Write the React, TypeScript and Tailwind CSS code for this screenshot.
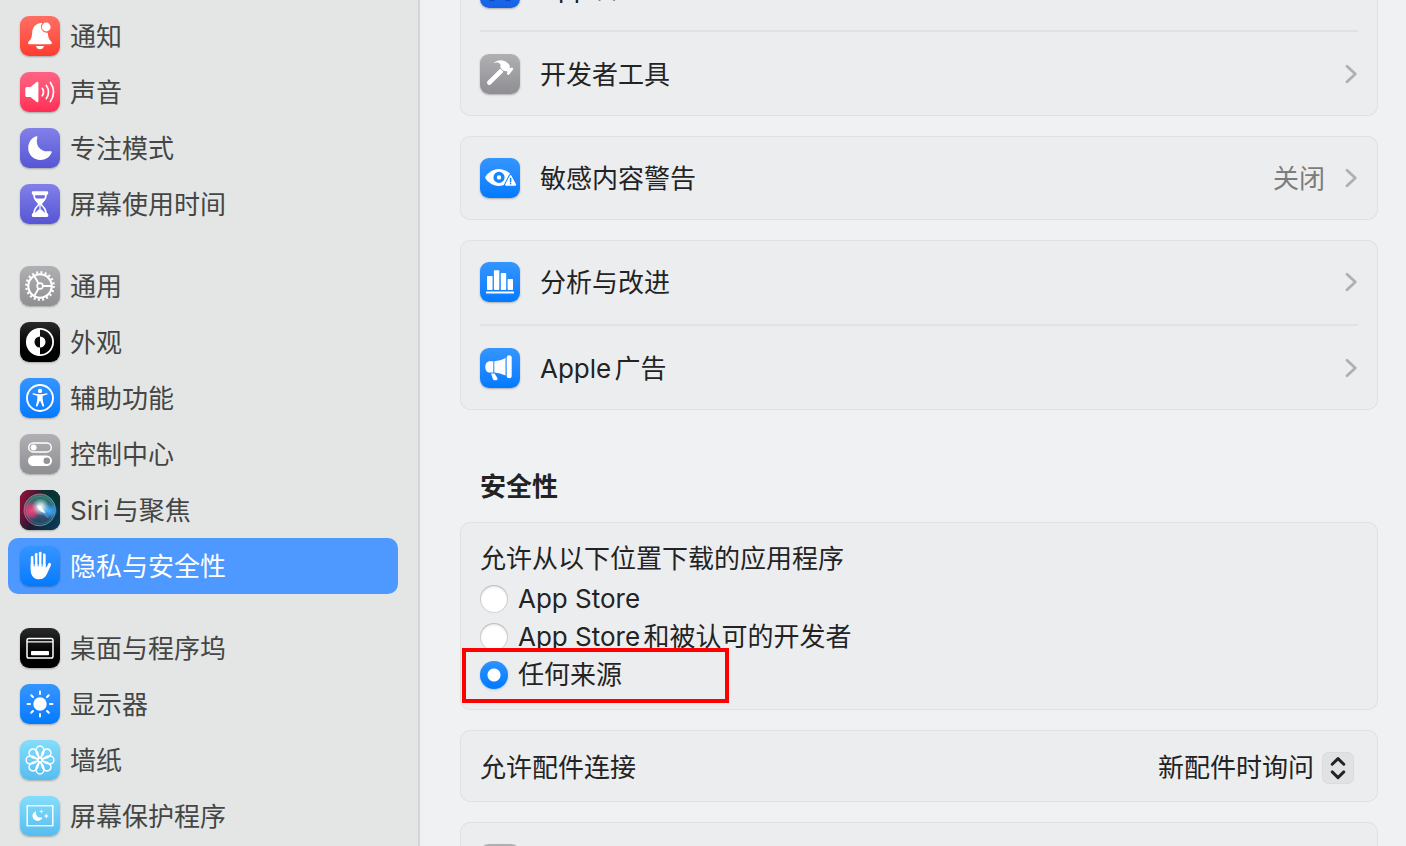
import type { ReactNode } from "react";

const TONES = {
  red: "bg-linear-to-b from-[#ff6e63] to-[#ff3a2f]",
  pink: "bg-linear-to-b from-[#ff6384] to-[#ff2d55]",
  indigo: "bg-linear-to-b from-[#8280e8] to-[#5755d4]",
  gray: "bg-linear-to-b from-[#b0b0b4] to-[#8f8e93]",
  black: "bg-linear-to-b from-[#2a2a2a] to-[#000000]",
  blue: "bg-linear-to-b from-[#3395ff] to-[#007aff]",
  sky: "bg-linear-to-b from-[#84ddfa] to-[#56bdf0]",
  deep: "bg-linear-to-b from-[#1c8cf8] to-[#1a5fe6]",
  siri: "bg-[#1b1a2c]",
};

type Tone = keyof typeof TONES;

function Tile({ tone, children }: { tone: Tone; children?: ReactNode }) {
  return (
    <span
      className={`block size-10 shrink-0 overflow-hidden rounded-[9px] shadow-[0_1px_2px_rgba(0,0,0,0.28)] ${TONES[tone]}`}
    >
      <svg viewBox="0 0 40 40" className="block size-10" fill="none" aria-hidden="true">
        {children}
      </svg>
    </span>
  );
}

const bell = (
  <Tile tone="red">
    <path
      fill="#fff"
      d="M18.6 7.6C20 6.6 21.3 6.8 22.2 7.3a5.9 5.9 0 0 0 5.6 9.4c.3 4.6 1.2 6.6 3.2 8.6 1.300 1.300 1.200 2.900-.4 2.900H9.300c-1.600 0-1.700-1.600-.4-2.900 2.200-2.200 3-4.400 3.300-9.100.2-4.200 2.600-7.200 6.400-8.600zM16 30h8c-.5 2-2 3.300-4 3.300S16.500 32 16 30z"
    />
    <circle cx="26.200" cy="11" r="4.400" fill="#fff" />
  </Tile>
);

const speaker = (
  <Tile tone="pink">
    <path
      fill="#fff"
      d="M6.800 14.900h3.700l5.900-4.700c1-.8 2-.4 2 .8v18c0 1.200-1 1.600-2 .8l-5.900-4.800H6.800c-.9 0-1.500-.6-1.500-1.500v-7.100c0-.9.6-1.500 1.500-1.500z"
    />
    <g stroke="#fff" strokeWidth="1.700" strokeLinecap="round">
      <path d="M22.300 16.300c1.500 2.300 1.500 5.100 0 7.400" />
      <path d="M26.300 13.400c2.700 4.100 2.700 9.100 0 13.200" />
      <path d="M30.400 10.500c4 6 4 13 0 19" />
    </g>
  </Tile>
);

const moon = (
  <Tile tone="indigo">
    <path
      fill="#fff"
      d="M16.200 8.300c.9-.3 1.400.3 1.100 1.100-2.200 7.400 2.400 15.100 13.300 13.800.9-.1 1.400.5 1 1.300C29.600 29.200 25.600 32 20.400 32 13.600 32 8.200 26.800 8.200 20c0-5.300 3.100-9.900 8-11.700z"
    />
  </Tile>
);

const hourglass = (
  <Tile tone="indigo">
    <path
      fill="#fff"
      d="M13 7.300h14a1.200 1.200 0 0 1 1.200 1.300l-.1 1c-.1.900-.7 1.300-1.300 1.400-.1 4-2.300 6.300-4.100 8-.7.700-.7 1.500 0 2.200 1.800 1.700 4 4 4.200 7.800.6.200 1.200.6 1.300 1.400l.1 1.200c.1.800-.5 1.400-1.300 1.400H13c-.8 0-1.300-.6-1.200-1.400l.1-1.200c.1-.8.700-1.200 1.300-1.400.1-3.800 2.300-6.100 4.100-7.800.7-.7.700-1.500 0-2.200-1.800-1.700-4-4-4.100-8-.6-.1-1.200-.5-1.300-1.400l-.1-1A1.200 1.200 0 0 1 13 7.300z"
    />
    <path
      fill="#6c6adf"
      d="M15 11.200h10c0 1.300-.3 2.500-.9 3.400h-8.200a7 7 0 0 1-.9-3.400zM19.400 21c.4-.4.800-.4 1.200 0v4.200c1.600.9 3.300 2.200 4.400 3.900l-.1-1.200c-.4-2.700-2-4.400-3.700-6.100-.3-.3-.5-.6-.6-.9h-1.200c-.1.300-.3.600-.6.900-1.700 1.700-3.300 3.400-3.700 6.100l-.1 1.200c1.100-1.700 2.800-3 4.400-3.900z"
    />
  </Tile>
);

const gear = (
  <Tile tone="gray">
    <g stroke="#fff">
      <circle cx="20" cy="20" r="11.700" strokeWidth="2.100" />
      <circle cx="20" cy="20" r="13.700" strokeWidth="2.300" strokeDasharray="2 2.304" />
      <circle cx="20" cy="20" r="2.900" strokeWidth="1.600" />
      <path strokeWidth="1.900" d="M22.900 20h8.300M18.550 17.500 14.400 10.300M18.550 22.500 14.400 29.700" />
    </g>
  </Tile>
);

const appearance = (
  <Tile tone="black">
    <circle cx="20" cy="20" r="13.100" stroke="#fff" strokeWidth="1.800" />
    <path fill="#fff" d="M20 6.500a13.500 13.500 0 0 0 0 27v-8a5.500 5.500 0 0 1 0-11zM20 14.500a5.500 5.500 0 0 1 0 11z" />
  </Tile>
);

const accessibility = (
  <Tile tone="blue">
    <circle cx="20" cy="20" r="13" stroke="#fff" strokeWidth="1.900" />
    <circle cx="20" cy="12.900" r="2.200" fill="#fff" />
    <path
      fill="#fff"
      d="M13.300 15.300c2.300.5 4.500.9 6.700.9s4.400-.4 6.700-.9c1-.2 1.300 1 .3 1.300-1.600.5-3 .8-4.300 1.100-.4 2.900.4 6.300 1.400 9.800.3 1.200-1.200 1.700-1.700.6L20.300 23h-.6l-2.100 5.100c-.5 1.100-2 .6-1.700-.6 1-3.500 1.800-6.900 1.400-9.800-1.300-.3-2.700-.6-4.300-1.100-1-.3-.7-1.500.3-1.300z"
    />
  </Tile>
);

const toggles = (
  <Tile tone="gray">
    <rect x="8.700" y="8.900" width="22.600" height="9" rx="4.500" stroke="#fff" strokeWidth="1.500" />
    <circle cx="13.600" cy="13.400" r="3" fill="#fff" />
    <rect x="8" y="21.500" width="24" height="10.600" rx="5.300" fill="#fff" />
    <circle cx="26.800" cy="26.800" r="3.300" fill="#949398" />
  </Tile>
);

const siri = (
  <Tile tone="siri">
    <defs>
      <linearGradient id="siri-base" x1="0" y1="0.300" x2="1" y2="0.700">
        <stop offset="0" stopColor="#8a1238" />
        <stop offset="0.450" stopColor="#1c1c33" />
        <stop offset="1" stopColor="#0a3a58" />
      </linearGradient>
      <linearGradient id="siri-top" x1="0" y1="0" x2="0" y2="1">
        <stop offset="0" stopColor="#2a8f6e" />
        <stop offset="0.550" stopColor="#4a6590" />
        <stop offset="1" stopColor="#1f4660" />
      </linearGradient>
      <radialGradient id="siri-pink">
        <stop offset="0" stopColor="#f5467a" />
        <stop offset="0.600" stopColor="#e03a70" stopOpacity="0.700" />
        <stop offset="1" stopColor="#d8265c" stopOpacity="0" />
      </radialGradient>
      <radialGradient id="siri-blue">
        <stop offset="0" stopColor="#45b4ff" />
        <stop offset="0.600" stopColor="#2f97ee" stopOpacity="0.700" />
        <stop offset="1" stopColor="#1b7fe0" stopOpacity="0" />
      </radialGradient>
      <radialGradient id="siri-glow">
        <stop offset="0" stopColor="#fff" />
        <stop offset="0.350" stopColor="#e9fbff" stopOpacity="0.750" />
        <stop offset="1" stopColor="#a8f0e8" stopOpacity="0" />
      </radialGradient>
    </defs>
    <rect width="40" height="40" fill="url(#siri-base)" />
    <path d="M20 0h20v18z" fill="#06392f" opacity="0.700" />
    <circle cx="20" cy="20" r="16" fill="url(#siri-top)" opacity="0.800" />
    <ellipse cx="11.500" cy="20.500" rx="9" ry="9.500" fill="url(#siri-pink)" />
    <ellipse cx="29" cy="21" rx="9" ry="7.500" fill="url(#siri-blue)" />
    <circle cx="20.500" cy="17" r="9" fill="url(#siri-glow)" />
    <path d="M17 15.500c3 .3 5.500 2.200 8.500 7.500-4.500-.4-7.500-3-8.500-7.500z" fill="#fff" opacity="0.900" />
    <path d="m23 22 5.500 6" stroke="#e7a3b5" strokeWidth="0.800" opacity="0.700" />
    <path d="M4.500 16a16 16 0 0 0 10 19" stroke="#e0527e" strokeWidth="0.900" />
    <path d="M4.500 16A16 16 0 0 1 26 5.200" stroke="#a5808f" strokeWidth="0.900" />
    <path d="M26 5.200A16 16 0 0 1 14.500 35" stroke="#48a9b0" strokeWidth="0.900" />
    <circle cx="20" cy="20" r="13.700" stroke="#7fb0b0" strokeWidth="0.500" opacity="0.600" />
  </Tile>
);

const hand = (
  <Tile tone="blue">
    <g stroke="#fff" strokeWidth="2.900" strokeLinecap="round">
      <path d="M12.200 11.500V23M16.200 8.500V22M20.200 7.200V22M24.200 9V22" />
      <path d="M29.600 18.300 26.500 25" />
    </g>
    <path
      fill="#fff"
      d="M10.750 18h14.900v4.200l3.300-3.900 1.800.8-3.600 8.400c-1.500 3.700-4.100 5.800-8 5.800-5 0-8.400-3.500-8.400-8.800z"
    />
    <path d="M14.200 11v9M18.200 9v11M22.200 9v11" stroke="#1c88ff" strokeWidth="0.900" strokeLinecap="round" />
  </Tile>
);

const desktop = (
  <Tile tone="black">
    <rect x="7" y="10.500" width="26" height="19.600" rx="1.800" stroke="#fff" strokeWidth="1.500" />
    <path d="M7 13.800h26" stroke="#fff" strokeWidth="1.300" />
    <rect x="11" y="23" width="18" height="4.200" rx="0.800" fill="#fff" />
  </Tile>
);

const sun = (
  <Tile tone="blue">
    <circle cx="20" cy="20" r="6.700" fill="#fff" />
    <g stroke="#fff" strokeWidth="2" strokeLinecap="round">
      <path d="M20 7.600v2.400M20 30v2.400M7.600 20H10M30 20h2.400M11.230 11.230l1.700 1.700M27.070 27.070l1.700 1.700M11.230 28.770l1.700-1.700M27.070 12.930l1.700-1.700" />
    </g>
  </Tile>
);

const PETALS = [0, 45, 90, 135, 180, 225, 270, 315];

const flower = (
  <Tile tone="sky">
    <g stroke="#fff" strokeWidth="1.500" strokeLinejoin="round">
      {PETALS.map((angle) => (
        <path
          key={angle}
          transform={`rotate(${angle} 20 20)`}
          d="M20 17.900c-1.700-.9-4-4.200-4-7.300a4 4.500 0 0 1 8 0c0 3.100-2.300 6.400-4 7.300z"
        />
      ))}
      <circle cx="20" cy="20" r="2" />
    </g>
  </Tile>
);

const screensaver = (
  <Tile tone="sky">
    <rect x="7.200" y="9.700" width="25.600" height="20" stroke="#fff" strokeWidth="1.400" />
    <path fill="#fff" d="M16.200 15.200c-1 4 1.700 7.200 6.300 6.200-.9 2.100-2.700 3.400-4.900 3.400-2.900 0-5.100-2.200-5.100-5 0-2.100 1.400-3.900 3.700-4.600z" />
    <path
      fill="#fff"
      d="m21.300 13.200.6 1.700 1.700.6-1.700.6-.6 1.700-.6-1.700-1.700-.6 1.700-.6zM26.300 17.300l.7 2 2 .7-2 .7-.7 2-.7-2-2-.7 2-.7z"
    />
  </Tile>
);

const appManage = (
  <Tile tone="deep">
    <path
      d="M12 26.500 20 12l8 14.500M9 23h22M10 32.500h4M26 32.500h4"
      stroke="#0f48c4"
      strokeWidth="1.400"
      strokeLinecap="round"
    />
  </Tile>
);

const hammer = (
  <Tile tone="gray">
    <path d="M9.300 28.700 21.200 16.900" stroke="#fff" strokeWidth="4.600" strokeLinecap="round" />
    <path
      fill="#fff"
      d="M14.500 8.300C18.500 5.300 24.500 5.600 27.900 9.300l1.300 1.500c.7.900.6 1.900.5 2.900l.8.500 1-.6c.4-.2.700-.1 1 .2l.6.700c.3.400.3.700 0 1l-4.100 5.200c-.3.300-.7.400-1 .1l-.9-.9c-.3-.3-.3-.6-.1-.9l.5-1-1-.9c-1.200.3-2.200 0-3.100-.8l-3.200-3c.8-1.900.3-3.500-1.200-4.400-1.300-.4-2.700-.4-4.100 0-.6.100-.9-.3-.4-.6z"
    />
    <path d="m19.600 13.700 5.100 5" stroke="#a09fa4" strokeWidth="0.800" />
  </Tile>
);

const eyeWarning = (
  <Tile tone="blue">
    <path
      fill="#fff"
      d="M19 10.900c7.300 0 13.700 6.200 13.700 8.600S26.300 28 19 28 5.300 21.800 5.300 19.500 11.700 10.900 19 10.900z"
    />
    <circle cx="19" cy="19.400" r="3.900" stroke="#1585ff" strokeWidth="3.400" />
    <path
      d="M29.800 17.600c.4-.7 1.200-.7 1.600 0l4.600 8.700c.4.700 0 1.400-.8 1.400H26c-.8 0-1.200-.7-.8-1.400z"
      fill="#fff"
      stroke="#1585ff"
      strokeWidth="2"
      paintOrder="stroke"
    />
    <path d="M30.600 20.500v3.200M30.600 25.600v.1" stroke="#1585ff" strokeWidth="1.500" strokeLinecap="round" />
  </Tile>
);

const chart = (
  <Tile tone="blue">
    <g fill="#fff">
      <rect x="7" y="14" width="5.600" height="14" rx="0.800" />
      <rect x="13.900" y="8.300" width="5.400" height="19.700" rx="0.800" />
      <rect x="20.800" y="11" width="5.400" height="17" rx="0.800" />
      <rect x="27.600" y="17" width="5.400" height="11" rx="0.800" />
      <rect x="6" y="29.600" width="28" height="2" rx="0.600" />
    </g>
  </Tile>
);

const megaphone = (
  <Tile tone="blue">
    <g fill="#fff">
      <path d="M10 13.300h3.300v11.200H10c-3 0-4.700-2.300-4.700-5.600s1.700-5.600 4.700-5.600z" />
      <path d="M14.300 13.200c4-.5 7.800-1.400 11.200-3.300v17.700c-3.400-1.900-7.200-2.800-11.200-3.200z" />
      <rect x="26.700" y="7.300" width="5" height="23" rx="2.500" />
      <path d="M11 25.600h3.600l2.600 4.100c.8 1.300.1 2.600-1.300 2.600h-1.200c-.9 0-1.500-.5-1.800-1.300z" />
    </g>
  </Tile>
);

type NavEntry = { label: string; icon: ReactNode; active?: boolean };

const NAV: NavEntry[][] = [
  [
    { label: "通知", icon: bell },
    { label: "声音", icon: speaker },
    { label: "专注模式", icon: moon },
    { label: "屏幕使用时间", icon: hourglass },
  ],
  [
    { label: "通用", icon: gear },
    { label: "外观", icon: appearance },
    { label: "辅助功能", icon: accessibility },
    { label: "控制中心", icon: toggles },
    { label: "Siri与聚焦", icon: siri },
    { label: "隐私与安全性", icon: hand, active: true },
  ],
  [
    { label: "桌面与程序坞", icon: desktop },
    { label: "显示器", icon: sun },
    { label: "墙纸", icon: flower },
    { label: "屏幕保护程序", icon: screensaver },
  ],
];

function Card({ children }: { children: ReactNode }) {
  return (
    <section className="rounded-[10px] bg-[#ecedef] px-5 shadow-[inset_0_0_0_1px_#e0e1e3]">{children}</section>
  );
}

function Row({ icon, label, value }: { icon: ReactNode; label: string; value?: string }) {
  return (
    <button type="button" className="flex h-[84px] w-full items-center gap-5 text-left">
      {icon}
      <span className="flex-1 pt-0.5">{label}</span>
      {value && <span className="pt-0.5 text-[#7b7c7d]">{value}</span>}
      <svg viewBox="0 0 13 20" className="h-5 w-[13px]" fill="none" aria-hidden="true">
        <path d="M2 2.300 10.300 10 2 17.700" stroke="#afb0b1" strokeWidth="2.800" strokeLinecap="round" strokeLinejoin="round" />
      </svg>
    </button>
  );
}

function Divider() {
  return <div className="h-0.5 bg-[#e1e2e4]" />;
}

function Choice({ label, checked }: { label: string; checked?: boolean }) {
  return (
    <label className="flex h-[38px] items-center gap-2.5">
      <input
        type="radio"
        name="download-source"
        defaultChecked={checked}
        className="size-7 shrink-0 appearance-none rounded-full bg-white shadow-[inset_0_0_0_1px_rgba(0,0,0,0.16),inset_0_2px_3px_rgba(0,0,0,0.12)] checked:bg-[radial-gradient(circle,#fff_6px,transparent_7px),linear-gradient(#2e93ff,#007aff)] checked:shadow-[0_1px_2px_rgba(0,80,200,0.25)]"
      />
      {label}
    </label>
  );
}

export default function App() {
  return (
    <div className="flex h-screen overflow-hidden bg-[#f0f1f3] font-['Inter','Noto_Sans_CJK_SC',sans-serif] text-[26px] leading-[38px] text-[#232324] [text-autospace:normal]">
      <nav className="flex w-[420px] shrink-0 flex-col gap-[26px] border-r-2 border-[#d3d4d4] bg-[#e4e6e5] py-2 pr-5 pl-2 text-[#444645]">
        {NAV.map((group) => (
          <ul key={group[0].label}>
            {group.map((item) => (
              <li key={item.label}>
                <a
                  href="#"
                  aria-current={item.active ? "page" : undefined}
                  className={`flex h-14 items-center gap-2.5 rounded-[10px] px-3 ${item.active ? "bg-[#4d99ff] text-white" : ""}`}
                >
                  {item.icon}
                  <span className="pt-0.5">{item.label}</span>
                </a>
              </li>
            ))}
          </ul>
        ))}
      </nav>

      <main className="-mt-[54px] flex min-w-0 flex-1 flex-col gap-5 pr-7 pl-10">
        <Card>
          <Row icon={appManage} label="App管理" />
          <Divider />
          <Row icon={hammer} label="开发者工具" />
        </Card>

        <Card>
          <Row icon={eyeWarning} label="敏感内容警告" value="关闭" />
        </Card>

        <Card>
          <Row icon={chart} label="分析与改进" />
          <Divider />
          <Row icon={megaphone} label="Apple广告" />
        </Card>

        <h2 className="mt-[38px] -mb-[4px] px-5 font-bold">安全性</h2>

        <Card>
          <fieldset className="pt-[18px] pb-4">
            <legend className="float-left mb-0.5 w-full">允许从以下位置下载的应用程序</legend>
            <div className="clear-both">
              <Choice label="App Store" />
              <Choice label="App Store和被认可的开发者" />
              <div className="relative">
                <Choice label="任何来源" checked />
                <div className="pointer-events-none absolute -top-2 -left-[18px] h-[55px] w-[267px] border-4 border-[#ff0000]" />
              </div>
            </div>
          </fieldset>
        </Card>

        <Card>
          <div className="flex h-[72px] items-center justify-between pt-1 pr-1">
            <label htmlFor="accessory">允许配件连接</label>
            <div className="relative flex items-center">
              <select
                id="accessory"
                className="appearance-none bg-transparent pr-10 text-right outline-none"
                defaultValue="ask"
              >
                <option value="ask">新配件时询问</option>
              </select>
              <span className="pointer-events-none absolute right-0 flex size-8 items-center justify-center rounded-[7px] bg-[#e1e2e3] shadow-[inset_0_0_0_1px_#dadbdc]">
                <svg viewBox="0 0 32 32" className="size-8" fill="none" aria-hidden="true">
                  <path
                    d="m10.200 12.300 5.800-5.700 5.800 5.700M10.200 19.900l5.800 5.700 5.800-5.700"
                    stroke="#232324"
                    strokeWidth="2.900"
                    strokeLinecap="round"
                    strokeLinejoin="round"
                  />
                </svg>
              </span>
            </div>
          </div>
        </Card>

        <Card>
          <div className="flex h-[84px] items-center">
            <Tile tone="gray" />
          </div>
        </Card>
      </main>
    </div>
  );
}
